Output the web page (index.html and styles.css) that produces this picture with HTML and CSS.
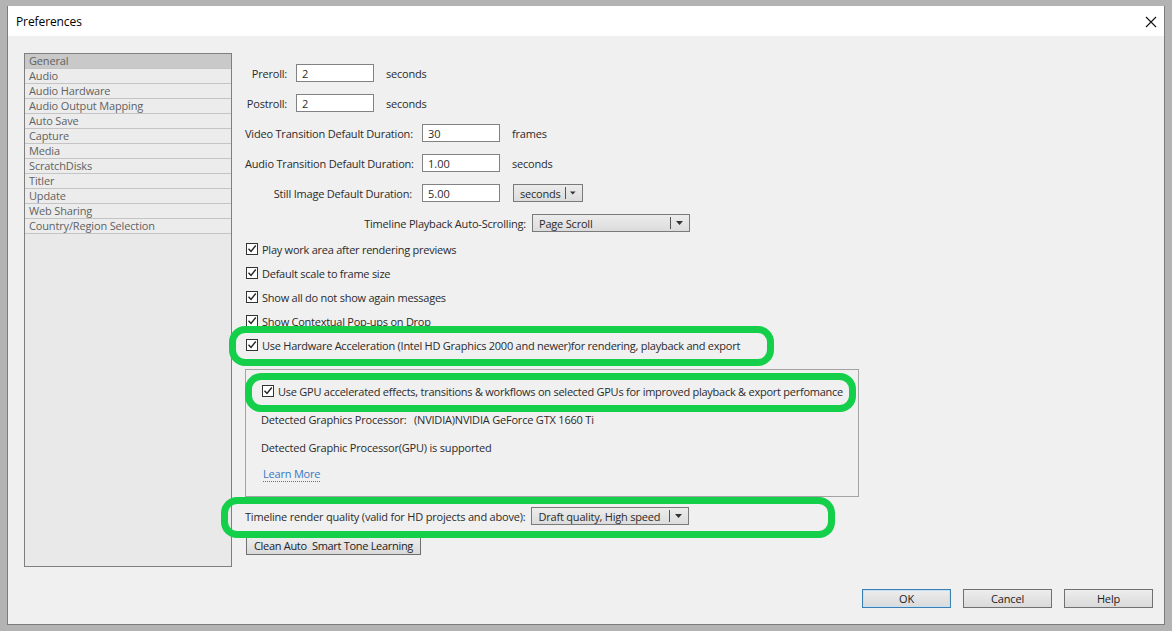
FILE: index.html
```html
<!DOCTYPE html>
<html lang="en">
<head>
    <meta charset="UTF-8">
    <meta name="viewport" content="width=device-width, initial-scale=1.0">
    <title>Preferences</title>
    <link rel="stylesheet" href="styles.css">
</head>
<body>
    <div class="dialog">
        <div class="titlebar">
            <span class="title">Preferences</span>
            <svg class="close" width="12" height="12" viewBox="0 0 12 12"><path d="M1 1 L11 11 M11 1 L1 11" stroke="#111" stroke-width="1.1" fill="none"/></svg>
        </div>

        <div class="content">
            <div class="main">
                <ul class="nav">
                    <li class="active">General</li>
                    <li>Audio</li>
                    <li>Audio Hardware</li>
                    <li>Audio Output Mapping</li>
                    <li>Auto Save</li>
                    <li>Capture</li>
                    <li>Media</li>
                    <li>ScratchDisks</li>
                    <li>Titler</li>
                    <li>Update</li>
                    <li>Web Sharing</li>
                    <li>Country/Region Selection</li>
                </ul>

                <div class="panel">
                    <div class="row">
                        <label class="lbl lbl-sm">Preroll:</label>
                        <input class="field" type="text" value="2">
                        <span class="unit">seconds</span>
                    </div>
                    <div class="row">
                        <label class="lbl lbl-sm">Postroll:</label>
                        <input class="field" type="text" value="2">
                        <span class="unit">seconds</span>
                    </div>
                    <div class="row">
                        <label class="lbl lbl-md">Video Transition Default Duration:</label>
                        <input class="field" type="text" value="30">
                        <span class="unit">frames</span>
                    </div>
                    <div class="row">
                        <label class="lbl lbl-md">Audio Transition Default Duration:</label>
                        <input class="field" type="text" value="1.00">
                        <span class="unit">seconds</span>
                    </div>
                    <div class="row">
                        <label class="lbl lbl-md">Still Image Default Duration:</label>
                        <input class="field" type="text" value="5.00">
                        <div class="select select-unit">
                            <span class="sel-text">seconds</span>
                            <span class="sel-sep"></span>
                            <svg class="sel-arrow" width="7" height="4" viewBox="0 0 7 4"><path d="M0 0 H7 L3.5 4 Z" fill="#333"/></svg>
                        </div>
                    </div>
                    <div class="row row-last">
                        <label class="lbl lbl-lg">Timeline Playback Auto-Scrolling:</label>
                        <div class="select select-wide">
                            <span class="sel-text">Page Scroll</span>
                            <span class="sel-sep"></span>
                            <svg class="sel-arrow" width="7" height="4" viewBox="0 0 7 4"><path d="M0 0 H7 L3.5 4 Z" fill="#333"/></svg>
                        </div>
                    </div>

                    <div class="checks">
                        <div class="check"><span class="box"><svg width="10" height="10" viewBox="0 0 10 10"><path d="M1.5 4.8 L4 7.5 L8.8 1.5" stroke="#222" stroke-width="1.4" fill="none"/></svg></span>Play work area after rendering previews</div>
                        <div class="check"><span class="box"><svg width="10" height="10" viewBox="0 0 10 10"><path d="M1.5 4.8 L4 7.5 L8.8 1.5" stroke="#222" stroke-width="1.4" fill="none"/></svg></span>Default scale to frame size</div>
                        <div class="check"><span class="box"><svg width="10" height="10" viewBox="0 0 10 10"><path d="M1.5 4.8 L4 7.5 L8.8 1.5" stroke="#222" stroke-width="1.4" fill="none"/></svg></span>Show all do not show again messages</div>
                        <div class="check"><span class="box"><svg width="10" height="10" viewBox="0 0 10 10"><path d="M1.5 4.8 L4 7.5 L8.8 1.5" stroke="#222" stroke-width="1.4" fill="none"/></svg></span>Show Contextual Pop-ups on Drop</div>
                        <div class="check"><span class="box"><svg width="10" height="10" viewBox="0 0 10 10"><path d="M1.5 4.8 L4 7.5 L8.8 1.5" stroke="#222" stroke-width="1.4" fill="none"/></svg></span>Use Hardware Acceleration (Intel HD Graphics 2000 and newer)for rendering, playback and export</div>
                    </div>

                    <div class="gpu-box">
                        <div class="check"><span class="box"><svg width="10" height="10" viewBox="0 0 10 10"><path d="M1.5 4.8 L4 7.5 L8.8 1.5" stroke="#222" stroke-width="1.4" fill="none"/></svg></span>Use GPU accelerated effects, transitions &amp; workflows on selected GPUs for improved playback &amp; export perfomance</div>
                        <div class="gpu-line"><span class="gpu-key">Detected Graphics Processor:</span>(NVIDIA)NVIDIA GeForce GTX 1660 Ti</div>
                        <div class="gpu-line">Detected Graphic Processor(GPU) is supported</div>
                        <div class="gpu-line gpu-link"><a class="link" href="#">Learn More</a></div>
                    </div>

                    <div class="row row-render">
                        <label class="lbl">Timeline render quality (valid for HD projects and above):</label>
                        <div class="select select-wide">
                            <span class="sel-text">Draft quality, High speed</span>
                            <span class="sel-sep"></span>
                            <svg class="sel-arrow" width="7" height="4" viewBox="0 0 7 4"><path d="M0 0 H7 L3.5 4 Z" fill="#333"/></svg>
                        </div>
                    </div>
                    <button class="btn btn-tone">Clean Auto&nbsp; Smart Tone Learning</button>
                </div>
            </div>

            <div class="footer">
                <button class="btn btn-ok">OK</button>
                <button class="btn">Cancel</button>
                <button class="btn">Help</button>
            </div>
        </div>

        <!-- green annotation rings drawn over the dialog -->
        <div class="ring ring-hw"></div>
        <div class="ring ring-gpu"></div>
        <div class="ring ring-render"></div>
    </div>
</body>
</html>
```

FILE: styles.css
```css
body {
    margin: 0;
    padding: 6px 0 0 7px;
    background-color: #b3b3b3;
    font-family: "Open Sans", "Noto Sans", sans-serif;
    font-size: 11px;
    color: #2b2b2b;
    overflow: hidden;
}

.dialog {
    position: relative;
    width: 1158px;
    height: 619px;
    background: #f0f0f0;
    border: 1px solid #7c7c7c;
    border-top: none;
    box-sizing: border-box;
}

.titlebar {
    height: 30px;
    background: #fff;
    display: flex;
    align-items: center;
    justify-content: space-between;
    padding: 0 7px 0 8px;
}

.title {
    font-size: 12px;
    color: #000;
    letter-spacing: -0.1px;
}

.close {
    margin-top: 1px;
}

.content {
    padding: 17px 11px 0 16px;
}

.main {
    display: flex;
    height: 514px;
}

.nav {
    list-style: none;
    margin: 0;
    padding: 0;
    width: 208px;
    box-sizing: border-box;
    border: 1px solid #7f7f7f;
    background: #e9e9e9;
}

.nav li {
    height: 15px;
    line-height: 14px;
    padding-left: 4px;
    box-sizing: border-box;
    border-bottom: 1px solid #c4c4c4;
    background: #ececec;
    color: #626262;
    letter-spacing: -0.15px;
}

.nav li.active {
    background: #c9c9c9;
}

.panel {
    margin-left: 13px;
    padding-top: 11px;
    flex: 1;
}

.row {
    display: flex;
    align-items: center;
    height: 18px;
    margin-bottom: 12px;
}

.row-last {
    margin-bottom: 9px;
}

.lbl {
    flex: none;
    text-align: right;
    letter-spacing: -0.2px;
    white-space: nowrap;
}

.lbl-sm {
    width: 42px;
    margin-right: 9px;
}

.lbl-md {
    width: 167px;
    margin-right: 10px;
}

.lbl-lg {
    width: 281px;
    margin-right: 6px;
}

.field {
    width: 78px;
    height: 18px;
    box-sizing: border-box;
    border: 1px solid #828282;
    background: #fff;
    padding: 0 5px;
    font-family: inherit;
    font-size: 11px;
    color: #2b2b2b;
    outline: none;
}

.unit {
    margin-left: 12px;
    letter-spacing: -0.2px;
}

.select {
    height: 18px;
    box-sizing: border-box;
    border: 1px solid #7a7a7a;
    background: linear-gradient(#ececec, #dcdcdc);
    display: flex;
    align-items: center;
    padding: 0 6px;
}

.select-unit {
    width: 70px;
    margin-left: 13px;
}

.select-wide {
    width: 158px;
}

.sel-text {
    flex: 1;
    white-space: nowrap;
    letter-spacing: -0.2px;
}

.sel-sep {
    width: 1px;
    height: 12px;
    background: #555;
    margin: 0 5px 0 4px;
}

.check {
    display: flex;
    align-items: center;
    height: 16px;
    margin-bottom: 8px;
    letter-spacing: -0.25px;
    white-space: nowrap;
}

.box {
    width: 12px;
    height: 12px;
    box-sizing: border-box;
    border: 1px solid #333;
    background: #fff;
    margin: 0 4px 0 1px;
    display: flex;
    align-items: center;
    justify-content: center;
    flex: none;
}

.gpu-box {
    margin-top: 16px;
    width: 614px;
    box-sizing: border-box;
    border: 1px solid #a3a3a3;
    padding: 13px 15px 14px 15px;
}

.gpu-box .check {
    margin-bottom: 13px;
}

.gpu-line {
    height: 16px;
    line-height: 16px;
    margin-bottom: 12px;
    letter-spacing: -0.2px;
    white-space: nowrap;
}

.gpu-line.gpu-link {
    margin-top: -2px;
    margin-bottom: 0;
}

.gpu-key {
    display: inline-block;
    width: 153px;
}

.link {
    color: #3a78c2;
    text-decoration: none;
    border-bottom: 1px dotted #3a78c2;
    margin-left: 2px;
}

.row-render {
    margin-top: 10px;
    margin-bottom: 11px;
}

.row-render .lbl {
    margin-right: 6px;
}

.btn {
    height: 19px;
    box-sizing: border-box;
    border: 1px solid #707070;
    background: linear-gradient(#ededed, #dadada);
    font-family: inherit;
    font-size: 11px;
    color: #222;
    padding: 0 8px;
    letter-spacing: -0.15px;
    white-space: nowrap;
}

.btn-tone {
    margin-left: 1px;
    width: 175px;
    padding: 0 3px;
    letter-spacing: -0.3px;
}

.footer {
    display: flex;
    justify-content: flex-end;
    gap: 12px;
    margin-top: 22px;
}

.footer .btn {
    width: 89px;
}

.btn-ok {
    border-color: #3c7fb1;
    box-shadow: inset 0 0 0 1px #c5e0f5;
}

.ring {
    position: absolute;
    box-sizing: border-box;
    border: 7px solid #14cf49;
    border-radius: 16px;
    pointer-events: none;
}

.ring-hw {
    left: 221px;
    top: 320px;
    width: 545px;
    height: 40px;
}

.ring-gpu {
    left: 237px;
    top: 367px;
    width: 611px;
    height: 39px;
}

.ring-render {
    left: 213px;
    top: 491px;
    width: 614px;
    height: 41px;
}
```
